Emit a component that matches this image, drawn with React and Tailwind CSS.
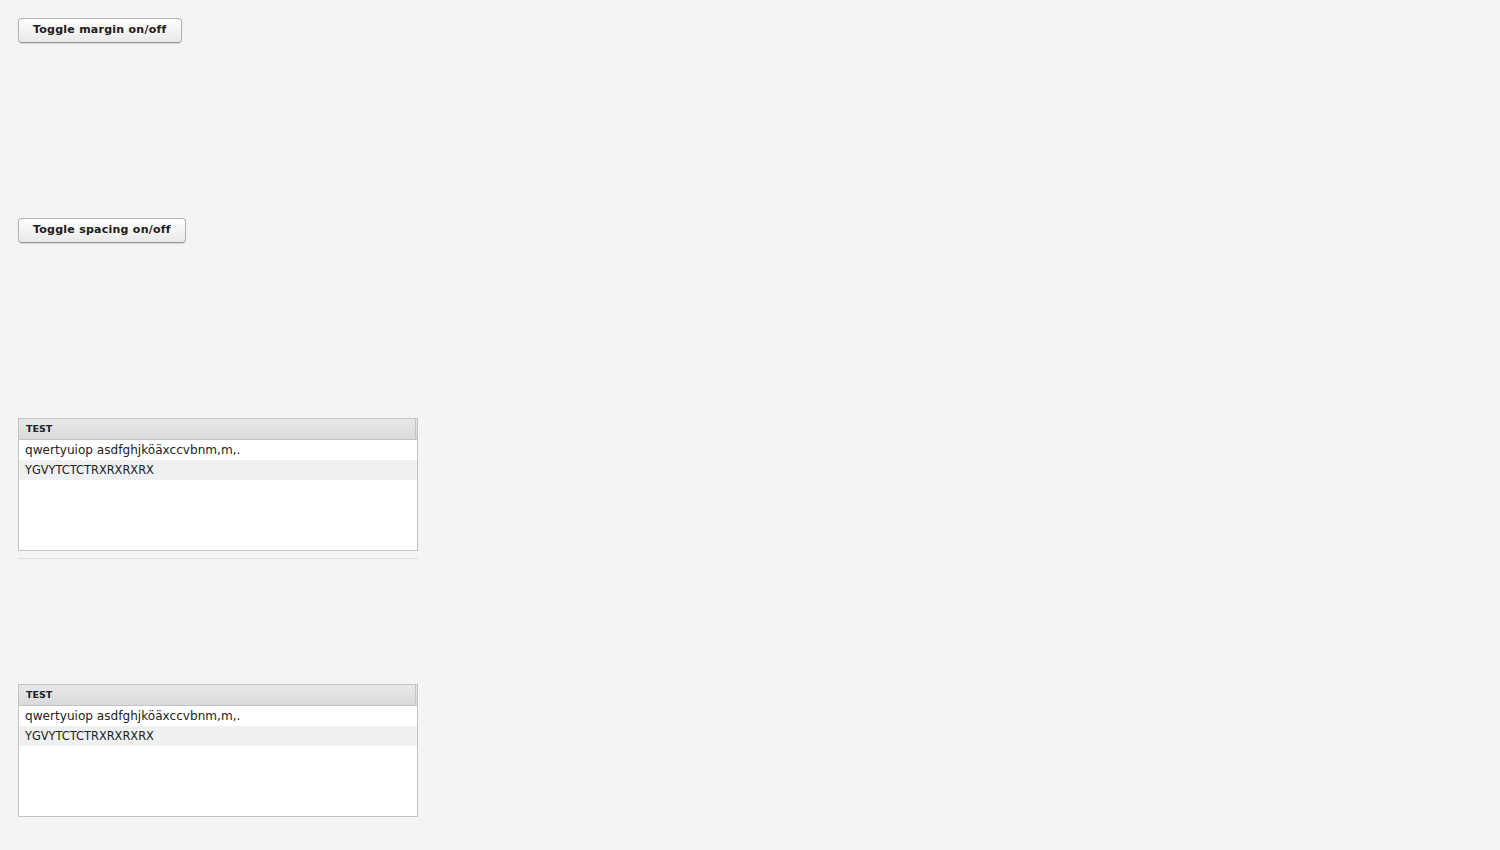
import React from "react";

const Btn = ({ children }) => (
  <button className="h-[25px] px-[14px] pb-[2px] rounded-[4px] border border-[#b3b3b3] border-b-[#999] bg-gradient-to-b from-[#ffffff] to-[#e9e9e9] shadow-[0_1px_1px_rgba(0,0,0,0.12)] text-[11px] font-bold text-[#1a1a1a] tracking-[0.25px] leading-none">
    {children}
  </button>
);

const Table = () => (
  <div className="w-[400px] h-[133px] border border-[#c2c3c4] bg-white flex flex-col">
    <div className="h-[21px] flex border-b border-[#c2c3c4] bg-gradient-to-b from-[#e7e8ea] to-[#d9dadc]">
      <div className="flex-1 border-r border-[#c2c3c4] pl-[7px] flex items-center text-[9.5px] font-bold text-[#222]">
        TEST
      </div>
      <div className="w-px" />
    </div>
    <div className="h-[20px] px-[6px] flex items-center text-[12.1px] text-[#222]">
      qwertyuiop asdfghjköäxccvbnm,m,.
    </div>
    <div className="h-[20px] px-[6px] pt-[2px] flex items-center text-[11.4px] text-[#222] bg-[#eff0f1]">
      YGVYTCTCTRXRXRXRX
    </div>
  </div>
);

export default function App() {
  return (
    <div className="min-h-screen bg-[#f4f4f4] p-[18px] flex flex-col items-start font-['DejaVu_Sans',sans-serif]">
      <Btn>Toggle margin on/off</Btn>
      <div className="h-[175px]" />
      <Btn>Toggle spacing on/off</Btn>
      <div className="h-[175px]" />
      <Table />
      <div className="w-[400px] h-px bg-[#dcdcdc] mt-[7px]" />
      <div className="h-[125px]" />
      <Table />
    </div>
  );
}
